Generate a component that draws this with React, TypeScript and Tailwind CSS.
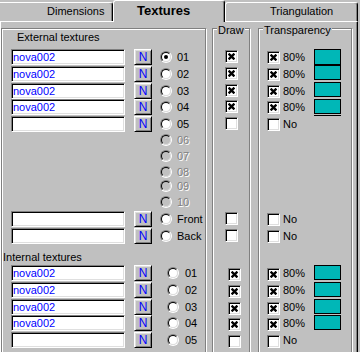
import React from "react";

type Row = {
  label: string;
  h: string;
  text?: string;
  sel?: boolean;
  dis?: boolean;
  draw?: boolean;
  trans?: "80%" | "No";
  sw?: string;
  under?: boolean;
};

const external: Row[] = [
  { label: "01", h: "h-[17px]", text: "nova002", sel: true, draw: true, trans: "80%", sw: "h-[16px]" },
  { label: "02", h: "h-[17px]", text: "nova002", draw: true, trans: "80%", sw: "-mt-px h-[15px]" },
  { label: "03", h: "h-[16px]", text: "nova002", draw: true, trans: "80%", sw: "-mt-px h-[15px]" },
  { label: "04", h: "h-[17px]", text: "nova002", draw: true, trans: "80%", sw: "h-[15px]", under: true },
  { label: "05", h: "h-[16px]", text: "", draw: false, trans: "No" },
  { label: "06", h: "h-[15px]", dis: true },
  { label: "07", h: "h-[17px]", dis: true },
  { label: "08", h: "h-[15px]", dis: true },
  { label: "09", h: "h-[14px]", dis: true },
  { label: "10", h: "h-[18px]", dis: true },
  { label: "Front", h: "h-[17px]", text: "", draw: false, trans: "No" },
  { label: "Back", h: "h-[17px]", text: "", draw: false, trans: "No" },
];

const internal: Row[] = [
  { label: "01", h: "h-[17px]", text: "nova002", draw: true, trans: "80%", sw: "h-[15px]" },
  { label: "02", h: "h-[17px]", text: "nova002", draw: true, trans: "80%", sw: "h-[15px]" },
  { label: "03", h: "h-[16px]", text: "nova002", draw: true, trans: "80%", sw: "h-[15px]" },
  { label: "04", h: "h-[17px]", text: "nova002", draw: true, trans: "80%", sw: "h-[15px]" },
  { label: "05", h: "h-[17px]", text: "", draw: false, trans: "No" },
];

const sunken =
  "border border-t-[#808080] border-l-[#808080] border-b-white border-r-white shadow-[inset_1px_1px_0_#000,inset_-1px_-1px_0_#dfdfdf]";

function Field({ text }: { text: string }) {
  return (
    <div className={`h-[16px] w-[114px] bg-white pl-[1px] leading-[14px] text-[#0000ff] ${sunken}`}>
      {text}
    </div>
  );
}

function NButton() {
  return (
    <div className="ml-[9px] flex h-[16px] w-[18px] items-center justify-center border border-t-white border-l-white border-b-black border-r-black text-[12px] leading-none text-[#0000ff] shadow-[inset_1px_1px_0_#dfdfdf,inset_-1px_-1px_0_#808080]">
      N
    </div>
  );
}

function Radio({ checked, disabled }: { checked?: boolean; disabled?: boolean }) {
  return (
    <span className="block h-[12px] w-[12px] rounded-full border border-t-[#808080] border-l-[#808080] border-b-white border-r-white">
      <span
        className={`flex h-full w-full items-center justify-center rounded-full border border-t-black border-l-black border-b-[#dfdfdf] border-r-[#dfdfdf] ${
          disabled ? "bg-[#c0c0c0]" : "bg-white"
        }`}
      >
        {checked && <span className="block h-[4px] w-[4px] rounded-full bg-black" />}
      </span>
    </span>
  );
}

function Check({ on, className }: { on?: boolean; className: string }) {
  return (
    <span className={`flex h-[13px] w-[13px] items-center justify-center bg-white ${sunken} ${className}`}>
      {on && (
        <svg width="7" height="7" viewBox="0 0 7 7">
          <path d="M0.6 0.6L6.4 6.4M6.4 0.6L0.6 6.4" stroke="#000" strokeWidth="2.3" />
        </svg>
      )}
    </span>
  );
}

function LeftRow({ r, inner }: { r: Row; inner?: boolean }) {
  return (
    <div className={`flex pl-[9px] ${r.h} ${r.dis ? "items-center" : "items-start"}`}>
      {r.dis ? (
        <div className="w-[141px]" />
      ) : (
        <>
          <Field text={r.text ?? ""} />
          <NButton />
        </>
      )}
      <div className={`flex h-[16px] items-center ${inner ? "ml-[15px]" : "ml-[8px]"}`}>
        <Radio checked={r.sel} disabled={r.dis} />
        <span
          className={`${inner ? "ml-[6px]" : "ml-[5px]"} leading-[14px] ${
            r.dis ? "text-[#808080] [text-shadow:1px_1px_0_#fff]" : ""
          }`}
        >
          {r.label}
        </span>
      </div>
    </div>
  );
}

function DrawRow({ r, inner }: { r: Row; inner?: boolean }) {
  return (
    <div className={`flex items-start ${r.h} ${inner ? "pl-[15px]" : "pl-[12px]"}`}>
      {r.draw !== undefined && <Check on={r.draw} className={inner ? "mt-[3px]" : "mt-[1px]"} />}
    </div>
  );
}

function TransRow({ r, inner }: { r: Row; inner?: boolean }) {
  return (
    <div className={`flex items-start pl-[8px] ${r.h}`}>
      {r.trans && (
        <>
          <Check on={r.trans === "80%"} className={inner ? "mt-[3px]" : "mt-[2px]"} />
          <span className="ml-[3px] h-[16px] w-[31px] leading-[16px]">{r.trans}</span>
          {r.sw && (
            <div className="flex flex-col">
              <div className={`w-[27px] border border-black bg-[#00b7b7] ${r.sw}`} />
              {r.under && <div className="mt-px h-px w-[27px] bg-black" />}
            </div>
          )}
        </>
      )}
    </div>
  );
}

const groupBox =
  "relative h-[330px] border border-[#808080] shadow-[inset_1px_1px_0_#fff,1px_1px_0_#fff]";

export default function App() {
  return (
    <div className="h-[352px] w-[360px] overflow-hidden bg-[#c0c0c0] font-['Liberation_Sans',Arial,sans-serif] text-[11px] text-black">
      {/* tabs */}
      <div className="flex h-[21px] items-end">
        <div className="h-[19px] w-[113px] rounded-tr-[3px] border-t border-r border-t-white border-r-black pl-[47px] leading-[17px] shadow-[inset_-1px_0_0_#808080]">
          Dimensions
        </div>
        <div className="relative z-10 -mb-px h-[22px] w-[112px] rounded-t-[3px] border-t border-l border-r border-t-white border-l-white border-r-black bg-[#c0c0c0] pl-[23px] text-[13px] font-bold leading-[20px] shadow-[inset_-1px_0_0_#808080]">
          Textures
        </div>
        <div className="h-[19px] w-[133px] rounded-t-[3px] border-t border-l border-r border-t-white border-l-white border-r-black pl-[44px] leading-[17px] shadow-[inset_-1px_0_0_#808080]">
          Triangulation
        </div>
      </div>

      {/* panel */}
      <div className="h-[331px] w-[358px] border-t border-l border-r border-t-white border-l-white border-r-black pt-[6px] shadow-[inset_-1px_0_0_#808080]">
        <div className="flex">
          <div className={`w-[205px] ${groupBox}`}>
            <div className="h-[20px] pl-[15px] pt-[1px] leading-[14px]">External textures</div>
            {external.map((r) => (
              <LeftRow key={"e" + r.label} r={r} />
            ))}
            <div className="h-[20px] pl-[1px] pt-[5px] leading-[14px]">Internal textures</div>
            {internal.map((r) => (
              <LeftRow key={"i" + r.label} r={r} inner />
            ))}
          </div>

          <div className={`ml-[6px] w-[38px] ${groupBox}`}>
            <span className="absolute left-[4px] top-[-5px] bg-[#c0c0c0] px-[1px] leading-[13px]">Draw</span>
            <div className="h-[20px]" />
            {external.map((r) => (
              <DrawRow key={"e" + r.label} r={r} />
            ))}
            <div className="h-[20px]" />
            {internal.map((r) => (
              <DrawRow key={"i" + r.label} r={r} inner />
            ))}
          </div>

          <div className={`ml-[8px] w-[94px] ${groupBox}`}>
            <span className="absolute left-[4px] top-[-5px] bg-[#c0c0c0] px-[1px] leading-[13px]">
              Transparency
            </span>
            <div className="h-[20px]" />
            {external.map((r) => (
              <TransRow key={"e" + r.label} r={r} />
            ))}
            <div className="h-[20px]" />
            {internal.map((r) => (
              <TransRow key={"i" + r.label} r={r} inner />
            ))}
          </div>
        </div>
      </div>
    </div>
  );
}
